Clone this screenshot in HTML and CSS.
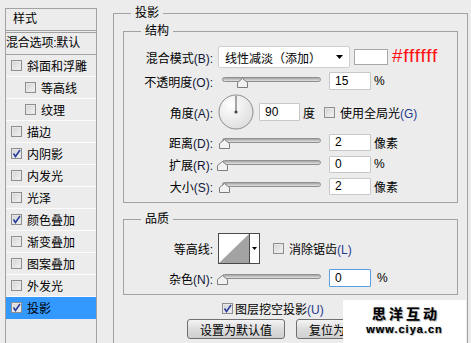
FILE: index.html
```html
<!DOCTYPE html>
<html lang="zh">
<head>
<meta charset="utf-8">
<title>图层样式 - 投影</title>
<link rel="stylesheet" href="styles.css">
</head>
<body>
<div class="page">
  <aside class="styles">
    <div class="styles-head">样式</div>
    <div class="styles-blend">混合选项:默认</div>
    <div class="styles-item"><span class="cb"></span>斜面和浮雕</div>
    <div class="styles-item sub"><span class="cb"></span>等高线</div>
    <div class="styles-item sub"><span class="cb"></span>纹理</div>
    <div class="styles-item"><span class="cb"></span>描边</div>
    <div class="styles-item"><span class="cb checked"><svg viewBox="0 0 9 9"><path d="M1.5 4.5 L3.5 7.5 L8 1"/></svg></span>内阴影</div>
    <div class="styles-item"><span class="cb"></span>内发光</div>
    <div class="styles-item"><span class="cb"></span>光泽</div>
    <div class="styles-item"><span class="cb checked"><svg viewBox="0 0 9 9"><path d="M1.5 4.5 L3.5 7.5 L8 1"/></svg></span>颜色叠加</div>
    <div class="styles-item"><span class="cb"></span>渐变叠加</div>
    <div class="styles-item"><span class="cb"></span>图案叠加</div>
    <div class="styles-item"><span class="cb"></span>外发光</div>
    <div class="styles-item active"><span class="cb checked"><svg viewBox="0 0 9 9"><path d="M1.5 4.5 L3.5 7.5 L8 1"/></svg></span>投影</div>
  </aside>

  <fieldset class="group outer">
    <legend>投影</legend>

    <fieldset class="group inner structure">
      <legend>结构</legend>

      <div class="row r1">
        <span class="lbl">混合模式<span class="acc">(B):</span></span>
        <div class="select"><span>线性减淡（添加）</span><svg class="arrow" viewBox="0 0 7 4"><path d="M0 0H7L3.5 4Z"/></svg></div>
        <span class="swatch"></span>
        <span class="hex">#ffffff</span>
      </div>

      <div class="row r2">
        <span class="lbl">不透明度<span class="acc">(O):</span></span>
        <div class="slider"><span class="track"></span><svg class="thumb" style="left:15px" viewBox="0 0 11 10"><path d="M0.5 9.5V4.5L5.5 0.5L10.5 4.5V9.5Z"/></svg></div>
        <span class="field">15</span>
        <span class="unit">%</span>
      </div>

      <div class="row r3">
        <span class="lbl">角度<span class="acc">(A):</span></span>
        <svg class="dial" viewBox="0 0 36 36">
          <defs><radialGradient id="dg" cx="0.35" cy="0.3" r="0.8"><stop offset="0" stop-color="#ffffff"/><stop offset="1" stop-color="#dcdcdc"/></radialGradient></defs>
          <circle cx="18" cy="18" r="17" fill="url(#dg)" stroke="#8c8c8c"/>
          <line x1="18" y1="18" x2="18" y2="2" stroke="#555" stroke-width="1"/>
          <circle cx="18" cy="18" r="1.6" fill="#444"/>
        </svg>
        <span class="field angle">90</span>
        <span class="unit deg">度</span>
        <span class="cb"></span>
        <span class="cblbl">使用全局光<span class="acc blue">(G)</span></span>
      </div>

      <div class="row r4">
        <span class="lbl">距离<span class="acc">(D):</span></span>
        <div class="slider"><span class="track"></span><svg class="thumb" style="left:-3px" viewBox="0 0 11 10"><path d="M0.5 9.5V4.5L5.5 0.5L10.5 4.5V9.5Z"/></svg></div>
        <span class="field">2</span>
        <span class="unit">像素</span>
      </div>

      <div class="row r5">
        <span class="lbl">扩展<span class="acc">(R):</span></span>
        <div class="slider"><span class="track"></span><svg class="thumb" style="left:-5px" viewBox="0 0 11 10"><path d="M0.5 9.5V4.5L5.5 0.5L10.5 4.5V9.5Z"/></svg></div>
        <span class="field">0</span>
        <span class="unit">%</span>
      </div>

      <div class="row r6">
        <span class="lbl">大小<span class="acc">(S):</span></span>
        <div class="slider"><span class="track"></span><svg class="thumb" style="left:-3px" viewBox="0 0 11 10"><path d="M0.5 9.5V4.5L5.5 0.5L10.5 4.5V9.5Z"/></svg></div>
        <span class="field">2</span>
        <span class="unit">像素</span>
      </div>
    </fieldset>

    <fieldset class="group inner quality">
      <legend>品质</legend>

      <div class="row q1">
        <span class="lbl">等高线:</span>
        <svg class="contour" viewBox="0 0 42 31">
          <rect x="0.5" y="0.5" width="41" height="30" fill="#fff" stroke="#4a4a4a"/>
          <path d="M1 30 L31 1 V30 Z" fill="#a3a3a3"/>
          <line x1="31.5" y1="0.5" x2="31.5" y2="30.5" stroke="#4a4a4a"/>
          <path d="M34 14 H39 L36.5 17 Z" fill="#000"/>
        </svg>
        <span class="cb aa"></span>
        <span class="cblbl">消除锯齿<span class="acc blue">(L)</span></span>
      </div>

      <div class="row q2">
        <span class="lbl">杂色<span class="acc">(N):</span></span>
        <div class="slider"><span class="track"></span><svg class="thumb" style="left:-5px" viewBox="0 0 11 10"><path d="M0.5 9.5V4.5L5.5 0.5L10.5 4.5V9.5Z"/></svg></div>
        <span class="field focus">0</span>
        <span class="unit pct">%</span>
      </div>
    </fieldset>

    <div class="knockout">
      <span class="cb checked"><svg viewBox="0 0 9 9"><path d="M1.5 4.5 L3.5 7.5 L8 1"/></svg></span>
      <span class="cblbl">图层挖空投影<span class="acc blue">(U)</span></span>
    </div>

    <div class="buttons">
      <span class="btn">设置为默认值</span>
      <span class="btn">复位为默认值</span>
    </div>
  </fieldset>

  <div class="watermark">
    <div class="wm-cn">思洋互动</div>
    <div class="wm-en">www.ciya.cn</div>
  </div>
</div>
</body>
</html>
```

FILE: styles.css
```css
* { box-sizing: border-box; }

html, body {
  margin: 0;
  padding: 0;
}

body {
  width: 471px;
  height: 343px;
  overflow: hidden;
  background: #ececec;
  color: #000;
  font-family: "Liberation Sans", "Noto Sans CJK SC", sans-serif;
  font-size: 12px;
}

.page {
  position: relative;
  display: flex;
  align-items: flex-start;
  height: 343px;
  overflow: hidden;
}

/* ---------- left styles list ---------- */
.styles {
  margin: 8px 0 0 5px;
  width: 92px;
  height: 335px;
  flex-shrink: 0;
  border: 1px solid #a2a2a2;
  border-bottom: none;
  background: #ececec;
}

.styles-head {
  height: 24px;
  line-height: 21px;
  padding-left: 7px;
  border-bottom: 3px double #a2a2a2;
}

.styles-blend {
  height: 22px;
  line-height: 21px;
  padding-left: 0;
  border-bottom: 1px solid #a2a2a2;
  white-space: nowrap;
  letter-spacing: -0.2px;
}

.styles-item {
  display: flex;
  align-items: center;
  gap: 5px;
  height: 22px;
  padding-left: 5px;
  padding-bottom: 1px;
  border-bottom: 1px solid #fbfbfb;
  white-space: nowrap;
}

.styles-item.sub { padding-left: 19px; }

.styles-item.active {
  background: #3399ff;
  border-bottom-color: #3399ff;
}

/* ---------- checkbox ---------- */
.cb {
  display: inline-flex;
  align-items: center;
  justify-content: center;
  width: 11px;
  height: 11px;
  flex-shrink: 0;
  border: 1px solid #8e8e8e;
  background: linear-gradient(135deg, #d2d2d2 0%, #f4f4f4 100%);
  box-shadow: inset 0 0 0 1px #e8e8e8;
}

.cb svg {
  width: 9px;
  height: 9px;
}

.cb svg path {
  fill: none;
  stroke: #2b3f9c;
  stroke-width: 1.6;
}

/* ---------- group boxes ---------- */
.group {
  margin: 0;
  border: 1px solid #a2a2a2;
  min-width: 0;
}

.group legend {
  padding: 0 4px;
  line-height: 16px;
  font-size: 12px;
}

.outer {
  margin: 5px 0 0 16px;
  width: 355px;
  height: 338px;
  padding: 1px 9px 0 9px;
  flex-shrink: 0;
  border-bottom: none;
}

.outer > legend { margin-left: 8px; }

.inner {
  padding: 7px 0 5px 0;
}

.inner > legend { margin-left: 17px; }

.structure { margin-top: 1px; }

.quality {
  margin-top: 8px;
  padding-top: 6px;
}

/* ---------- rows ---------- */
.row {
  display: flex;
  align-items: center;
  height: 22px;
  white-space: nowrap;
}

.r2, .r4 { margin-top: 2px; }
.r3 { margin-top: 3px; height: 34px; }
.q1 { height: 31px; }
.q2 { margin-top: 3px; }

.lbl {
  width: 89px;
  margin-right: 5px;
  text-align: right;
  flex-shrink: 0;
}

.acc { color: #10163a; }
.acc.blue { color: #1f3a8f; }

.select {
  display: flex;
  align-items: center;
  width: 132px;
  height: 22px;
  padding-left: 6px;
  background: #fff;
  border: 1px solid #d0d0d0;
  border-radius: 2px;
}

.select span { flex: 1; }

.arrow {
  width: 7px;
  height: 4px;
  margin-right: 6px;
  fill: #000;
}

.swatch {
  width: 34px;
  height: 16px;
  margin-left: 4px;
  background: #fff;
  border: 1px solid #a8a8a8;
}

.hex {
  margin-left: 4px;
  color: #ff1010;
  font-family: "Liberation Sans", sans-serif;
  font-size: 19px;
  letter-spacing: 0.8px;
  line-height: 20px;
  margin-top: -2px;
}

/* ---------- slider ---------- */
.slider {
  position: relative;
  align-self: stretch;
  width: 99px;
  margin-left: 4px;
  flex-shrink: 0;
}

.track {
  display: block;
  margin-top: 7px;
  height: 5px;
  border-radius: 3px;
  border: 1px solid #8f8f8f;
  background: linear-gradient(#a5a5a5, #e2e2e2);
}

.thumb {
  position: absolute;
  top: 8px;
  width: 11px;
  height: 10px;
}

.thumb path {
  fill: #f2f2f2;
  stroke: #7d7d7d;
}

/* ---------- fields ---------- */
.field {
  display: flex;
  align-items: center;
  width: 42px;
  height: 18px;
  margin-left: 8px;
  padding-left: 5px;
  background: #fff;
  border: 1px solid #c8c8c8;
  border-radius: 1px;
  font-size: 12px;
}

.r4 .field, .r5 .field, .r6 .field { height: 17px; }

.field.angle {
  width: 41px;
  margin-left: 5px;
}

.field.focus { border-color: #5a9de0; }

.unit { margin-left: 3px; }
.unit.deg { margin-left: 3px; margin-right: 9px; }
.unit.pct { margin-left: 6px; }

.cblbl { margin-left: 5px; }

.dial {
  width: 36px;
  height: 36px;
  flex-shrink: 0;
}

.contour {
  width: 42px;
  height: 31px;
  flex-shrink: 0;
}

.cb.aa { margin-left: 13px; }

/* ---------- bottom ---------- */
.knockout {
  display: flex;
  align-items: center;
  height: 16px;
  margin-top: 5px;
  padding-left: 99px;
  white-space: nowrap;
}

.knockout .cblbl { margin-left: 2px; }

.buttons {
  display: flex;
  gap: 11px;
  margin-top: 3px;
  padding-left: 64px;
}

.btn {
  display: flex;
  align-items: center;
  justify-content: center;
  width: 98px;
  height: 20px;
  flex-shrink: 0;
  border: 1px solid #707070;
  border-radius: 3px;
  background: linear-gradient(#f4f4f4, #dcdcdc 50%, #d0d0d0);
  font-size: 12px;
}

/* ---------- watermark overlay ---------- */
.watermark {
  position: absolute;
  left: 343px;
  top: 300px;
  width: 123px;
  height: 43px;
  background: #fff;
  text-align: center;
  padding-top: 6px;
}

.wm-cn {
  font-family: "Noto Sans CJK SC", sans-serif;
  font-weight: 700;
  font-size: 14px;
  line-height: 15px;
  letter-spacing: 3px;
  padding-left: 3px;
  color: #000;
  text-shadow: 0 0 1px #888, 1px 1px 0 #bbb;
}

.wm-en {
  font-family: "Liberation Sans", sans-serif;
  font-weight: 700;
  font-size: 11px;
  line-height: 12px;
  margin-top: 2px;
  letter-spacing: 1px;
  color: #000;
  text-shadow: 0 0 1px #777, 1px 1px 0 #ccc;
}
```
